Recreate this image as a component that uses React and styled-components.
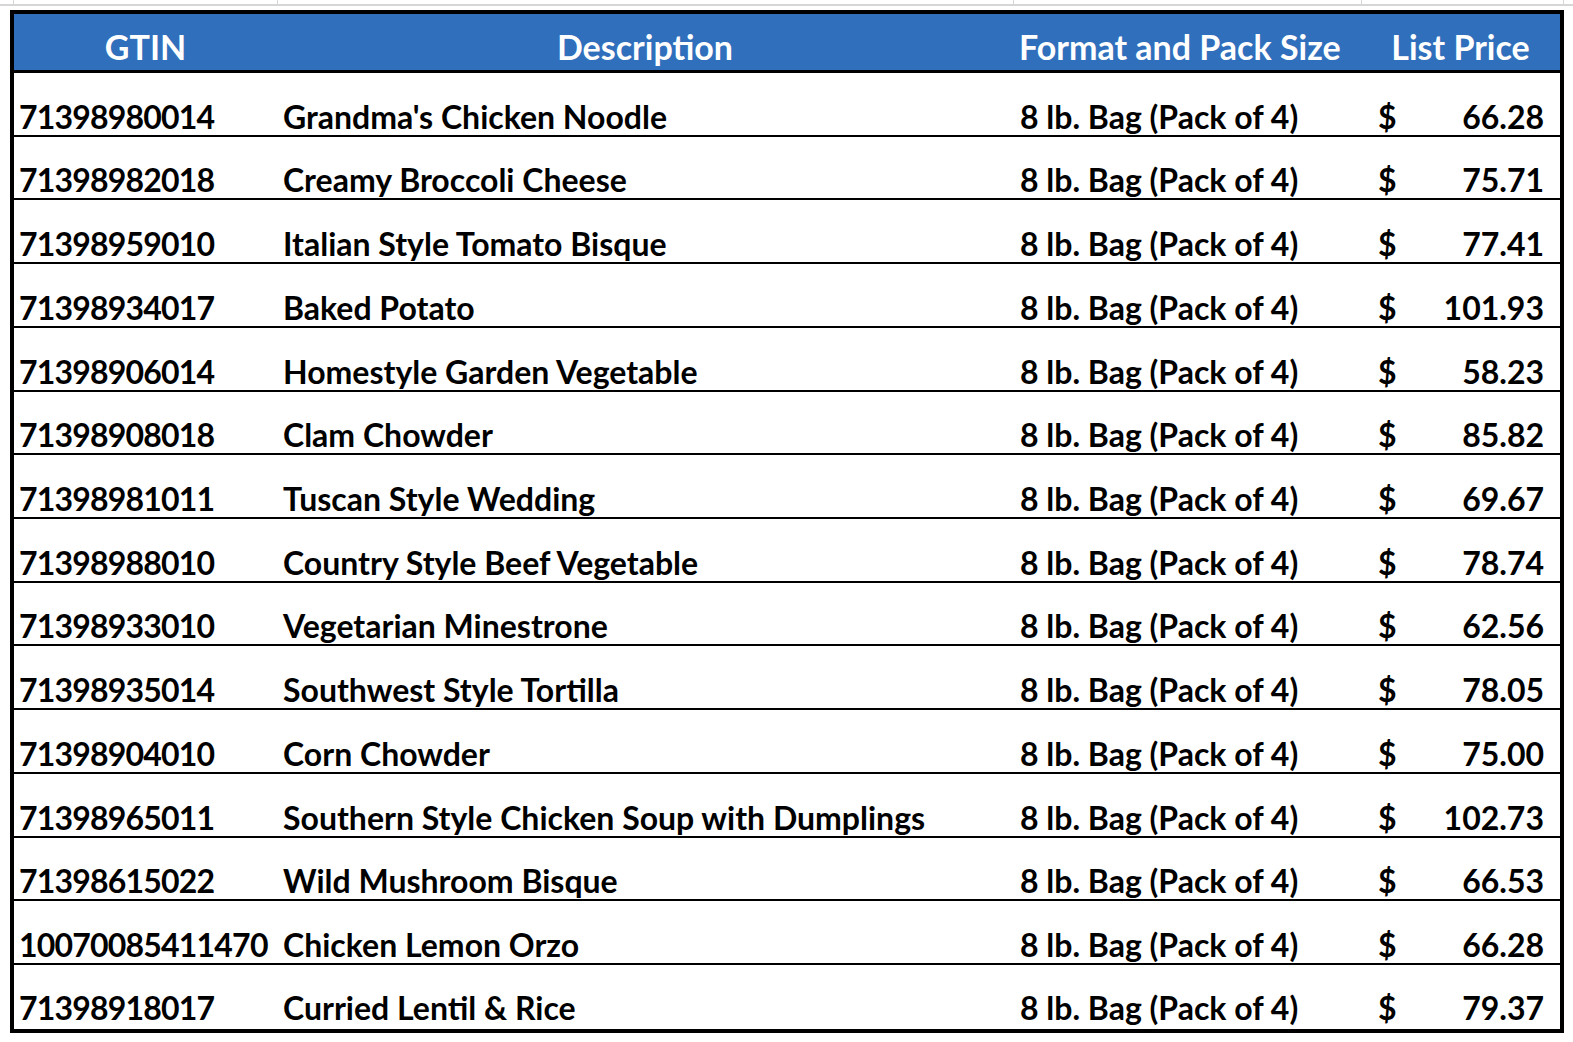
import React from "react";
import styled, { createGlobalStyle } from "styled-components";

const Global = createGlobalStyle`
  html, body { margin: 0; padding: 0; background: #ffffff; }
  body { width: 1573px; height: 1042px; overflow: hidden; font-family: Lato, "Open Sans", sans-serif; }
`;

const COLS = "263px 736px 348px 199px";

const Page = styled.div`
  width: 1573px;
  height: 1042px;
  display: flex;
  flex-direction: column;
`;

const GridStrip = styled.div`
  display: flex;
  height: 6px;
  border-bottom: 2px solid #d6d6d6;
  box-sizing: border-box;
`;

const GridCell = styled.div`
  flex: 0 0 ${(p) => p.$w}px;
  border-right: 1px solid #d6d6d6;
  box-sizing: border-box;
`;

const TableWrap = styled.div`
  margin: 4px 0 0 10px;
  width: 1554px;
  border: 4px solid #000;
  box-sizing: border-box;
`;

const HeaderRow = styled.div`
  display: grid;
  grid-template-columns: ${COLS};
  height: 59px;
  background: #306fbc;
  border-bottom: 3px solid #000;
  box-sizing: border-box;
`;

const HeadCell = styled.div`
  display: flex;
  align-items: flex-end;
  justify-content: ${(p) => p.$justify || "center"};
  padding: 0 ${(p) => p.$pr || 0}px 3px ${(p) => p.$pl || 0}px;
  color: #ffffff;
  font-weight: 700;
  font-size: 34px;
  line-height: 40px;
  white-space: nowrap;
`;

const Row = styled.div`
  display: grid;
  grid-template-columns: ${COLS};
  height: 63.73px;
  box-sizing: border-box;
  border-bottom: ${(p) => (p.$last ? "none" : "2px solid #000")};
`;

const Cell = styled.div`
  display: flex;
  align-items: flex-end;
  padding: 0 0 ${(p) => (p.$last ? 3 : 0)}px ${(p) => p.$pl || 0}px;
  color: #000;
  font-weight: 700;
  font-size: 32px;
  line-height: 37px;
  letter-spacing: ${(p) => p.$ls || 0}px;
  white-space: nowrap;
  overflow: visible;
`;

const PriceCell = styled(Cell)`
  justify-content: space-between;
  padding-left: 17px;
  padding-right: 16px;
`;

const rows = [
  ["71398980014", "Grandma's Chicken Noodle", "66.28"],
  ["71398982018", "Creamy Broccoli Cheese", "75.71"],
  ["71398959010", "Italian Style Tomato Bisque", "77.41"],
  ["71398934017", "Baked Potato", "101.93"],
  ["71398906014", "Homestyle Garden Vegetable", "58.23"],
  ["71398908018", "Clam Chowder", "85.82"],
  ["71398981011", "Tuscan Style Wedding", "69.67"],
  ["71398988010", "Country Style Beef Vegetable", "78.74"],
  ["71398933010", "Vegetarian Minestrone", "62.56"],
  ["71398935014", "Southwest Style Tortilla", "78.05"],
  ["71398904010", "Corn Chowder", "75.00"],
  ["71398965011", "Southern Style Chicken Soup with Dumplings", "102.73"],
  ["71398615022", "Wild Mushroom Bisque", "66.53"],
  ["10070085411470", "Chicken Lemon Orzo", "66.28"],
  ["71398918017", "Curried Lentil & Rice", "79.37"],
];

export default function App() {
  return (
    <Page>
      <Global />
      <GridStrip>
        <GridCell $w={14} />
        <GridCell $w={264} />
        <GridCell $w={736} />
        <GridCell $w={348} />
        <GridCell $w={202} />
      </GridStrip>
      <TableWrap>
        <HeaderRow>
          <HeadCell>GTIN</HeadCell>
          <HeadCell>Description</HeadCell>
          <HeadCell $justify="flex-start" $pl={6}>Format and Pack Size</HeadCell>
          <HeadCell $pr={0}>List Price</HeadCell>
        </HeaderRow>
        {rows.map(([gtin, desc, price], i) => {
          const last = i === rows.length - 1;
          return (
            <Row key={gtin + i} $last={last}>
              <Cell $pl={5} $ls={-0.8} $last={last}>{gtin}</Cell>
              <Cell $pl={6} $last={last}>{desc}</Cell>
              <Cell $pl={7} $last={last}>8 lb. Bag (Pack of 4)</Cell>
              <PriceCell $last={last}>
                <span>$</span>
                <span>{price}</span>
              </PriceCell>
            </Row>
          );
        })}
      </TableWrap>
    </Page>
  );
}
